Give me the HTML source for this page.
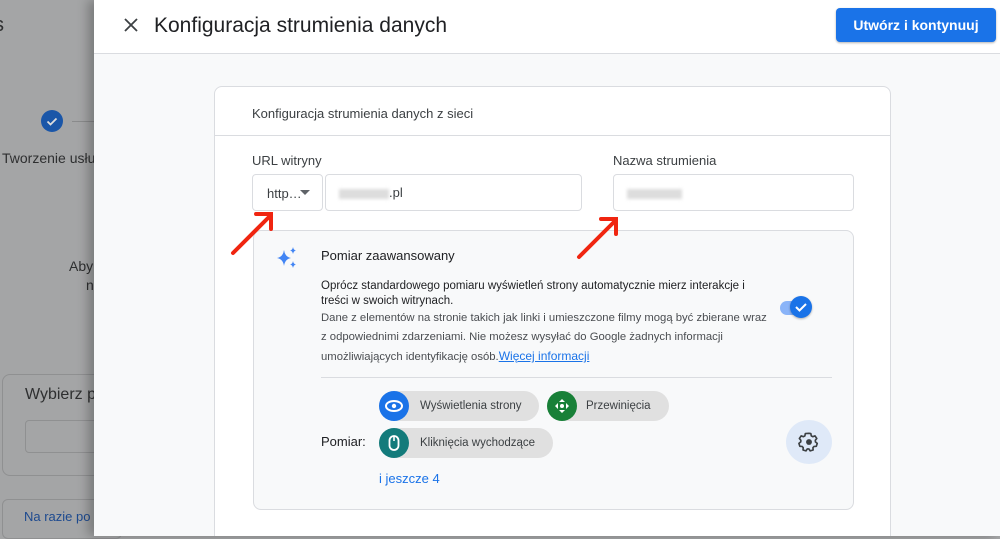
<!DOCTYPE html>
<html><head><meta charset="utf-8"><style>
*{box-sizing:border-box;margin:0;padding:0}
body{width:1000px;height:536px;overflow:hidden;font-family:"Liberation Sans",Arial,sans-serif;background:#a4a5a6;position:relative;color:#202124}
.abs{position:absolute}
.bg{color:#2e2f30}
#panel{position:absolute;left:94px;top:0;width:906px;height:536px;background:#f8f9fa;box-shadow:-6px 0 10px rgba(0,0,0,.25);overflow:hidden}
#hdr{position:absolute;left:0;top:0;width:906px;height:54px;background:#fff;border-bottom:1px solid #dadce0}
.card{position:absolute;left:120px;top:86px;width:677px;height:460px;background:#fff;border:1px solid #dadce0;border-radius:8px}
.inp{position:absolute;background:#fff;border:1px solid #dadce0;border-radius:4px}
.blur{position:absolute;height:10px;background:#ddd;filter:blur(1.5px)}
.adv{position:absolute;left:38px;top:143px;width:601px;height:280px;background:#f8f9fa;border:1px solid #dadce0;border-radius:8px}
.chip{position:absolute;height:30px;background:#e0e0e0;border-radius:15px;font-size:11.5px;color:#3c4043;line-height:30px}
.chip .ic{position:absolute;left:0;top:0;width:30px;height:30px;border-radius:50%}
</style></head><body>
<div class="abs bg" style="left:-6px;top:14px;font-size:20px">s</div>
<div class="abs" style="left:41px;top:110px;width:22px;height:22px;border-radius:50%;background:#1a56a8"><svg width="22" height="22"><path d="M6.5 11.5l3 3 6-6" stroke="#ddd" stroke-width="1.8" fill="none"/></svg></div>
<div class="abs" style="left:72px;top:121px;width:30px;height:1px;background:#8a8b8c"></div>
<div class="abs bg" style="left:2px;top:150px;font-size:14px">Tworzenie usług</div>
<div class="abs bg" style="left:69px;top:258px;font-size:14px">Aby</div>
<div class="abs bg" style="left:86px;top:277px;font-size:14px">n</div>
<div class="abs" style="left:2px;top:374px;width:120px;height:102px;border:1px solid #8f9091;border-radius:8px"></div>
<div class="abs bg" style="left:25px;top:386px;font-size:16px">Wybierz p</div>
<div class="abs" style="left:25px;top:420px;width:90px;height:33px;border:1px solid #8f9091;border-radius:4px"></div>
<div class="abs" style="left:2px;top:499px;width:120px;height:40px;border:1px solid #8f9091;border-radius:6px"></div>
<div class="abs" style="left:24px;top:509px;font-size:13px;color:#1d4a8f">Na razie po</div>

<div id="panel">
 <div id="hdr">
  <svg class="abs" style="left:28px;top:16px" width="18" height="18"><path d="M3 3L15 15M15 3L3 15" stroke="#3c4043" stroke-width="1.8"/></svg>
  <div class="abs" style="left:60px;top:14px;font-size:21px;color:#202124">Konfiguracja strumienia danych</div>
  <div class="abs" style="left:742px;top:8px;width:160px;height:34px;background:#1a73e8;border-radius:4px;color:#fff;font-size:14px;font-weight:bold;text-align:center;line-height:34px;box-shadow:0 1px 2px rgba(0,0,0,.3)">Utwórz i kontynuuj</div>
 </div>
 <div class="card">
  <div class="abs" style="left:37px;top:19px;font-size:13px;color:#3c4043">Konfiguracja strumienia danych z sieci</div>
  <div class="abs" style="left:0;top:48px;width:675px;height:1px;background:#dadce0"></div>
  <div class="abs" style="left:37px;top:66px;font-size:13px;color:#3c4043">URL witryny</div>
  <div class="abs" style="left:398px;top:66px;font-size:13px;color:#3c4043">Nazwa strumienia</div>
  <div class="inp" style="left:37px;top:87px;width:71px;height:37px"><span class="abs" style="left:14px;top:11px;font-size:13px;color:#3c4043">http…</span><span class="abs" style="left:47px;top:15px;border:5px solid transparent;border-top-color:#5f6368;border-bottom:0"></span></div>
  <div class="inp" style="left:110px;top:87px;width:257px;height:37px"><div class="blur" style="left:13px;top:14px;width:50px"></div><span class="abs" style="left:63px;top:10px;font-size:13px;color:#3c4043">.pl</span></div>
  <div class="inp" style="left:398px;top:87px;width:241px;height:37px"><div class="blur" style="left:13px;top:14px;width:55px"></div></div>
  <div class="adv">
   <svg class="abs" style="left:22px;top:16px" width="22" height="22"><path d="M8 3Q9 10 15 11Q9 12 8 19Q7 12 1 11Q7 10 8 3Z" fill="#4285f4"/><path d="M17 0Q17.5 3 20 3.5Q17.5 4 17 7Q16.5 4 14 3.5Q16.5 3 17 0Z" fill="#4285f4"/><path d="M17 14Q17.5 17 20 17.5Q17.5 18 17 21Q16.5 18 14 17.5Q16.5 17 17 14Z" fill="#4285f4"/></svg>
   <div class="abs" style="left:67px;top:17px;font-size:13px;color:#202124">Pomiar zaawansowany</div>
   <div class="abs" style="left:67px;top:48px;width:448px;font-size:11.5px;line-height:15px;color:#202124">Oprócz standardowego pomiaru wyświetleń strony automatycznie mierz interakcje i treści w swoich witrynach.</div>
   <div class="abs" style="left:67px;top:78px;width:450px;font-size:11.3px;line-height:19px;color:#4a4d51">Dane z elementów na stronie takich jak linki i umieszczone filmy mogą być zbierane wraz z odpowiednimi zdarzeniami. Nie możesz wysyłać do Google żadnych informacji umożliwiających identyfikację osób.<span style="color:#1a73e8;text-decoration:underline;font-size:12px">Więcej informacji</span></div>
   <div class="abs" style="left:526px;top:70px;width:30px;height:14px;border-radius:7px;background:#8ab4f8"></div>
   <div class="abs" style="left:536px;top:65px;width:22px;height:22px;border-radius:50%;background:#1a73e8;box-shadow:0 1px 2px rgba(0,0,0,.3)"><svg width="22" height="22"><path d="M6 11l3.5 3.5L16 8" stroke="#fff" stroke-width="2" fill="none"/></svg></div>
   <div class="abs" style="left:67px;top:146px;width:511px;height:1px;background:#dadce0"></div>
   <div class="chip" style="left:125px;top:160px;width:160px"><div class="ic" style="background:#1a73e8"><svg width="30" height="30"><ellipse cx="15" cy="15" rx="8" ry="5" stroke="#fff" stroke-width="2" fill="none"/><circle cx="15" cy="15" r="2.2" fill="#fff"/></svg></div><span style="margin-left:41px">Wyświetlenia strony</span></div>
   <div class="chip" style="left:293px;top:160px;width:122px"><div class="ic" style="background:#188038"><svg width="30" height="30"><path d="M15 8l3 3h-6zM15 22l3-3h-6zM8 15l3-3v6zM22 15l-3-3v6z" fill="#fff"/><circle cx="15" cy="15" r="2" fill="#fff"/></svg></div><span style="margin-left:39px">Przewinięcia</span></div>
   <div class="abs" style="left:67px;top:203px;font-size:13px;color:#202124">Pomiar:</div>
   <div class="chip" style="left:125px;top:197px;width:174px"><div class="ic" style="background:#137b7b"><svg width="30" height="30"><rect x="10.5" y="8" width="9" height="14" rx="4.5" stroke="#fff" stroke-width="1.8" fill="none"/><path d="M15 8v5" stroke="#fff" stroke-width="1.6"/></svg></div><span style="margin-left:41px">Kliknięcia wychodzące</span></div>
   <div class="abs" style="left:125px;top:240px;font-size:13px;color:#1a73e8">i jeszcze 4</div>
   <div class="abs" style="left:532px;top:189px;width:46px;height:44px;border-radius:50%;background:#dfe9f8"><svg class="abs" style="left:12px;top:11px" width="22" height="22" viewBox="0 0 24 24"><path d="M12 2.5l2 .3.5 2.5 1.6.9 2.4-.9 2 2.8-1.6 2 .1 1.8 2 1.6-1 3.2-2.5.1-1.2 1.4.2 2.5-3.2 1-1.4-2.1h-1.8l-1.4 2.1-3.2-1 .2-2.5-1.2-1.4-2.5-.1-1-3.2 2-1.6.1-1.8-1.6-2 2-2.8 2.4.9 1.6-.9.5-2.5z" stroke="#3c4043" stroke-width="1.8" fill="none" stroke-linejoin="round"/><circle cx="12" cy="12" r="3.2" fill="#3c4043"/></svg></div>
  </div>
 </div>
</div>
<svg class="abs" style="left:0;top:0" width="1000" height="536"><g stroke="#f02510" stroke-width="4" fill="none" stroke-linecap="round"><path d="M233 253L270 216M256 214H271V229"/><path d="M579 257L615 221M601 219H616V234"/></g></svg>
</body></html>
